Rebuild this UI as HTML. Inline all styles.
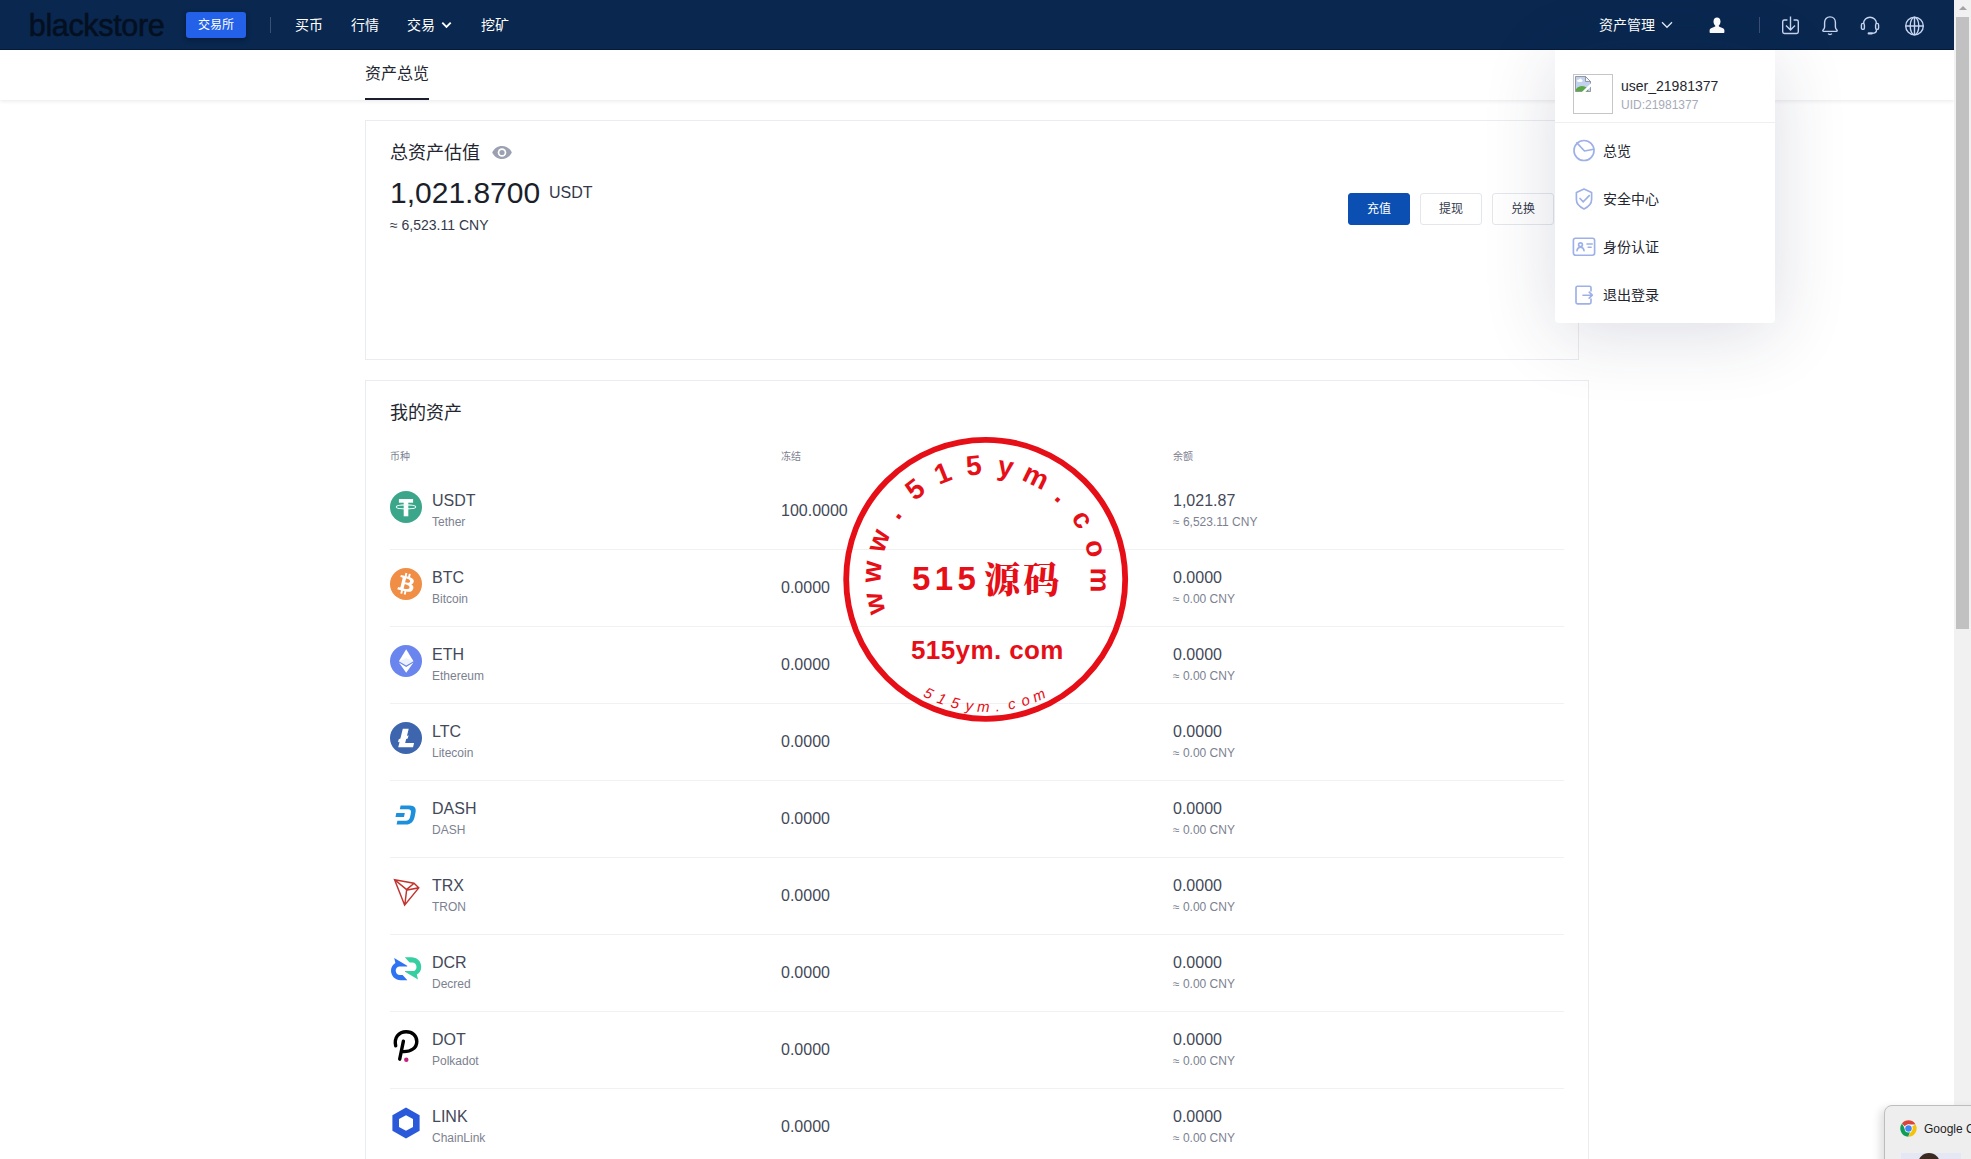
<!DOCTYPE html>
<html lang="zh-CN">
<head>
<meta charset="utf-8">
<title>资产总览</title>
<style>
*{box-sizing:border-box;margin:0;padding:0}
html,body{width:1971px;height:1159px;overflow:hidden;background:#fff}
body{position:relative;font-family:"Liberation Sans","Noto Sans CJK SC",sans-serif;color:#1e2330;-webkit-font-smoothing:antialiased}
.abs{position:absolute;white-space:nowrap}
/* header */
#hdr{position:absolute;left:0;top:0;width:1954px;height:50px;background:#09274f;border-bottom:1px solid #041a3a}
#logo{left:28.800px;top:5px;font-size:30.5px;line-height:40px;color:#040f20;letter-spacing:-.35px;-webkit-text-stroke:.5px #040f20}
#exch{left:186px;top:12px;width:60px;height:26px;border-radius:3px;background:#2461e9;color:#fff;font-size:12px;line-height:26px;text-align:center;box-shadow:0 2px 5px rgba(0,5,30,.35)}
.hi{position:absolute}
.vsep{position:absolute;width:1px;background:#3a5073}
.nav{position:absolute;top:0;height:50px;line-height:50px;font-size:14px;color:#fff;white-space:nowrap}
/* subnav */
#sub{position:absolute;left:0;top:50px;width:1954px;height:50px;background:#fff;box-shadow:0 1px 4px rgba(20,30,60,.10)}
#subt{left:365px;top:51px;height:50px;line-height:46px;font-size:16px;color:#23262f}
#subu{position:absolute;left:365px;top:98px;width:64px;height:2px;background:#1b1f2b}
/* cards */
.card{position:absolute;background:#fff;border:1px solid #ebecef}
#c1{left:365px;top:120px;width:1214px;height:240px}
#c2{left:365px;top:380px;width:1224px;height:800px}
.h18{font-size:18px;line-height:24px;color:#23262f}
#total{left:390px;top:175px;font-size:30px;line-height:36px;color:#1b1f2b}
#totalu{left:549px;top:183px;font-size:16px;line-height:20px;color:#33394a}
#cny{left:390px;top:217px;font-size:14px;line-height:16px;color:#33394a}
.btn{position:absolute;top:193px;width:62px;height:32px;border-radius:3px;border:1px solid #e4e6ec;background:#fff;font-size:12px;line-height:30px;text-align:center;color:#33394a}
.btn.p{background:#0b4fb3;border-color:#0b4fb3;color:#fff}
/* table */
.th{position:absolute;top:450px;font-size:10px;line-height:14px;color:#7c8190}
.row{position:absolute;left:390px;width:1174px;height:77px;border-bottom:1px solid #f0f1f3}
.row .ic{position:absolute;left:0;top:18px;width:32px;height:32px;overflow:visible}
.row .sym{position:absolute;left:42px;top:18px;font-size:16px;line-height:20px;color:#434959}
.row .nm{position:absolute;left:42px;top:42px;font-size:12px;line-height:14px;color:#7c8190}
.row .fr{position:absolute;left:391px;top:28px;font-size:16px;line-height:20px;color:#434959}
.row .bal{position:absolute;left:783px;top:18px;font-size:16px;line-height:20px;color:#434959}
.row .bc{position:absolute;left:783px;top:42px;font-size:12px;line-height:14px;color:#7c8190}
/* dropdown */
#dd{position:absolute;left:1555px;top:50px;width:220px;height:273px;background:#fff;border-radius:0 0 4px 4px;box-shadow:0 10px 72px rgba(35,45,90,.16)}
#ava{position:absolute;left:18px;top:24px;width:40px;height:40px;border:1px solid #c6c6c6;background:#fff}
#un{left:66px;top:28px;font-size:14px;line-height:16px;color:#23262f}
#uid{left:66px;top:48px;font-size:12px;line-height:14px;color:#a6abb8}
#ddl{position:absolute;left:0;top:72px;width:220px;height:1px;background:#eeeff3}
.mi{position:absolute;left:0;width:220px;height:48px}
.mi svg{position:absolute;left:17px;top:12px;width:24px;height:24px}
.mi span{position:absolute;left:48px;top:0;line-height:48px;font-size:14px;color:#23262f}
/* scrollbar */
#sb{position:absolute;left:1954px;top:0;width:17px;height:1159px;background:#f1f1f1}
#sbt{position:absolute;left:2px;top:17px;width:13px;height:612px;background:#c1c1c1}
#sba{position:absolute;left:4.5px;top:6px;width:0;height:0;border-left:4px solid transparent;border-right:4px solid transparent;border-bottom:4.5px solid #a3a3a3}
/* chrome toast */
#toast{position:absolute;left:1884px;top:1105px;width:120px;height:80px;background:#eee;border:1px solid #bdbdbd;border-radius:8px;box-shadow:-4px 3px 9px rgba(0,0,0,.13)}
#toast span{position:absolute;left:39px;top:14.5px;font-size:12px;line-height:16px;color:#222;white-space:nowrap}
</style>
</head>
<body>
<div id="sub"></div>
<div id="subt" class="abs">资产总览</div>
<div id="subu"></div>

<div id="c1" class="card"></div>
<div class="abs h18" style="left:390px;top:141px">总资产估值</div>
<svg class="abs" style="left:492px;top:145px" width="20" height="15" viewBox="0 0 20 15"><path fill="#9ba1b1" d="M10 1C5.600 1 1.800 3.700.2 7.500 1.800 11.300 5.600 14 10 14s8.200-2.700 9.800-6.500C18.200 3.700 14.400 1 10 1z"/><circle cx="10" cy="7.500" r="4.300" fill="#fff"/><circle cx="10" cy="7.500" r="2.600" fill="#9ba1b1"/></svg>
<div id="total" class="abs">1,021.8700</div>
<div id="totalu" class="abs">USDT</div>
<div id="cny" class="abs">≈ 6,523.11 CNY</div>
<div class="btn p" style="left:1348px">充值</div>
<div class="btn" style="left:1420px">提现</div>
<div class="btn" style="left:1492px">兑换</div>

<div id="c2" class="card"></div>
<div class="abs h18" style="left:390px;top:401px">我的资产</div>
<div class="th" style="left:390px">币种</div>
<div class="th" style="left:781px">冻结</div>
<div class="th" style="left:1173px">余额</div>

<!--ROWS-->
<div class="row" style="top:473px"><svg class="ic" viewBox="0 0 32 32"><circle cx="16" cy="16" r="16" fill="#3ca68b"/><rect x="8.900" y="8" width="14.200" height="3.700" fill="#fff"/><rect x="13.700" y="8" width="4.600" height="17.300" fill="#fff"/><ellipse cx="16" cy="15.900" rx="9.700" ry="2" fill="none" stroke="#e9fff8" stroke-width="1.100"/></svg><div class="sym">USDT</div><div class="nm">Tether</div><div class="fr">100.0000</div><div class="bal">1,021.87</div><div class="bc">≈ 6,523.11 CNY</div></div>
<div class="row" style="top:550px"><svg class="ic" viewBox="0 0 32 32"><circle cx="16" cy="16" r="16" fill="#ef8e44"/><path fill="#fff" transform="translate(16 16) scale(1.1) translate(-16.1 -16.2)" d="M23.189 14.02c.314-2.096-1.283-3.223-3.465-3.975l.708-2.84-1.728-.43-.69 2.765c-.454-.114-.92-.22-1.385-.326l.695-2.783L15.596 6l-.708 2.839c-.376-.086-.746-.17-1.104-.26l.002-.009-2.384-.595-.46 1.846s1.283.294 1.256.312c.7.175.826.638.805 1.006l-.806 3.235c.048.012.11.03.18.057l-.183-.045-1.13 4.532c-.086.212-.303.531-.793.41.018.025-1.256-.313-1.256-.313l-.858 1.978 2.25.561c.418.105.828.215 1.231.318l-.715 2.872 1.727.43.708-2.84c.472.127.93.245 1.378.357l-.706 2.828 1.728.43.715-2.866c2.948.558 5.164.333 6.097-2.333.752-2.146-.037-3.385-1.588-4.192 1.13-.26 1.98-1.003 2.207-2.538zm-3.95 5.538c-.533 2.147-4.148.986-5.32.695l.95-3.805c1.172.293 4.929.872 4.37 3.11zm.535-5.569c-.487 1.953-3.495.96-4.47.717l.86-3.45c.975.243 4.118.696 3.61 2.733z"/></svg><div class="sym">BTC</div><div class="nm">Bitcoin</div><div class="fr">0.0000</div><div class="bal">0.0000</div><div class="bc">≈ 0.00 CNY</div></div>
<div class="row" style="top:627px"><svg class="ic" viewBox="0 0 32 32"><circle cx="16" cy="16" r="16" fill="#6a86ee"/><path fill="#fff" d="M16.200 4.200l7.300 12-7.300 4.300-7.300-4.300z"/><path fill="#fff" d="M16.200 27.800l7.300-10.200-7.300 4.300-7.300-4.300z"/><path fill="#6a86ee" fill-opacity=".12" d="M16.200 13l7.300 3.200-7.300 4.300-7.300-4.300z"/></svg><div class="sym">ETH</div><div class="nm">Ethereum</div><div class="fr">0.0000</div><div class="bal">0.0000</div><div class="bc">≈ 0.00 CNY</div></div>
<div class="row" style="top:704px"><svg class="ic" viewBox="0 0 32 32"><circle cx="16" cy="16" r="16" fill="#3d66ae"/><path fill="#fff" transform="translate(16 16) scale(1.15) translate(-16 -16)" d="M10.427 19.214L9 19.768l.688-2.759 1.444-.58L13.213 8h5.129l-1.519 6.196 1.41-.571-.68 2.75-1.427.571-.848 3.483H23L22.127 24H9.252z"/></svg><div class="sym">LTC</div><div class="nm">Litecoin</div><div class="fr">0.0000</div><div class="bal">0.0000</div><div class="bc">≈ 0.00 CNY</div></div>
<div class="row" style="top:781px"><svg class="ic" viewBox="0 0 32 32"><g fill="#1c8fdd"><path d="M10.6 6.4h9.2c5 0 6.6 2.9 5.7 7.2l-.9 4.4c-.9 4.300-3.600 7.600-8.800 7.600H6.600l.8-3.900h8.400c2.400 0 3.800-1.300 4.300-3.700l.8-3.900c.5-2.400-.4-3.800-2.800-3.800H9.800z"/><path d="M6.300 14.100h8.500l-.8 3.800H5.500z"/></g></svg><div class="sym">DASH</div><div class="nm">DASH</div><div class="fr">0.0000</div><div class="bal">0.0000</div><div class="bc">≈ 0.00 CNY</div></div>
<div class="row" style="top:858px"><svg class="ic" viewBox="0 0 32 32"><g transform="translate(16.6 16.6) scale(1.45) translate(-16.6 -16.8)"><path fill="#c2342f" d="M21.932 9.913L7.5 7.257l7.595 19.112 10.583-12.894-3.746-3.562zm-.232 1.170l2.208 2.099-6.038 1.093 3.830-3.192zm-5.142 2.973l-6.364-5.278 10.402 1.914-4.038 3.364zm-.453.934l-1.038 8.580L9.472 9.487l6.633 5.502zm.960.455l6.687-1.210-7.670 9.343.983-8.133z"/></g></svg><div class="sym">TRX</div><div class="nm">TRON</div><div class="fr">0.0000</div><div class="bal">0.0000</div><div class="bc">≈ 0.00 CNY</div></div>
<div class="row" style="top:935px"><svg class="ic" viewBox="0 0 32 32"><g transform="translate(0 -.8)"><path fill="#2e74f2" d="M4.200 5.900L17.200 13.500V14.200H9.600C7.300 14.200 5.700 16 5.700 18.400C5.700 20.900 7.400 22.900 10 22.900H12.600L17.400 28H10.800C5.200 28 1 24 1 18.400C1 14.900 2.600 12.300 5.400 10.700Z"/><path fill="#35cfa1" transform="rotate(180 16.1 16.55)" d="M4.200 5.900L17.200 13.500V14.200H9.600C7.300 14.200 5.700 16 5.700 18.400C5.700 20.900 7.400 22.900 10 22.900H12.600L17.400 28H10.800C5.200 28 1 24 1 18.400C1 14.900 2.600 12.300 5.400 10.700Z"/></svg><div class="sym">DCR</div><div class="nm">Decred</div><div class="fr">0.0000</div><div class="bal">0.0000</div><div class="bc">≈ 0.00 CNY</div></div>
<div class="row" style="top:1012px"><svg class="ic" viewBox="0 0 32 32"><path fill="none" stroke="#000" stroke-width="3.400" stroke-linecap="round" stroke-linejoin="round" transform="translate(0 -1)" d="M5.700 16.800C3.900 9 8.500 2.700 16.200 2.700c6.300 0 10.600 4.200 10.600 9.700 0 6.100-5.300 10.800-14.600 10.200M13.400 12.200L9.700 30.200"/><circle cx="16.300" cy="29.800" r="2.200" fill="#c4207c"/></svg><div class="sym">DOT</div><div class="nm">Polkadot</div><div class="fr">0.0000</div><div class="bal">0.0000</div><div class="bc">≈ 0.00 CNY</div></div>
<div class="row" style="top:1089px"><svg class="ic" viewBox="0 0 32 32"><path fill="#2a5ada" d="M16 .6L2.400 8.300v15.400L16 31.400l13.600-7.700V8.300zM16 8.200l7 3.900v7.800l-7 3.900-7-3.900v-7.800z"/></svg><div class="sym">LINK</div><div class="nm">ChainLink</div><div class="fr">0.0000</div><div class="bal">0.0000</div><div class="bc">≈ 0.00 CNY</div></div>
<!--/ROWS-->
<!--STAMP-->
<svg id="stamp" width="1971" height="1159" viewBox="0 0 1971 1159" style="position:absolute;left:0;top:0;pointer-events:none" font-family="'Liberation Sans',sans-serif" fill="#e60f17">
<circle cx="985.7" cy="579.3" r="139.5" fill="none" stroke="#e60f17" stroke-width="5.8"/>
<text x="885.4 880.2 883.2 898.3 914.8 939.1 967.0 996.4 1020.7 1053.3 1070.8 1084.4 1090.8" y="612.3 583.3 554.0 521.0 501.5 484.9 475.7 474.6 479.5 498.8 517.4 542.6 567.4" rotate="-102.3 -86.2 -70.2 -54.2 -38.1 -22.1 -6.0 10.0 26.1 42.2 58.2 74.2 90.3" font-size="28" font-weight="700">www.515ym.com</text>
<text x="922.6 936.0 950.0 964.9 977.1 996.1 1009.1 1023.1 1035.2" y="695.9 702.2 707.0 710.2 711.7 711.4 709.8 706.5 702.4" rotate="26.6 20.2 13.8 7.4 1.0 -5.4 -11.8 -18.2 -24.6" font-size="15" font-style="italic">515ym.com</text>
<text x="912" y="590" font-size="33" font-weight="700" letter-spacing="4.4">515<tspan font-family="'Liberation Serif','Noto Serif CJK SC',serif" font-size="36" font-weight="900" letter-spacing="3" dx="4" dy="3">源码</tspan></text>
<text x="911" y="659" font-size="26" font-weight="700" letter-spacing="0.4">515ym. com</text>
</svg>
<!--/STAMP-->

<div id="hdr">
  <div id="logo" class="abs">blackstore</div>
  <div id="exch" class="abs">交易所</div>
  <div class="vsep" style="left:270px;top:17px;height:16px"></div>
  <div class="nav" style="left:295px">买币</div>
  <div class="nav" style="left:351px">行情</div>
  <div class="nav" style="left:407px">交易</div>
  <div class="nav" style="left:481px">挖矿</div>
  <div class="nav" style="left:1599px">资产管理</div>
  <div class="vsep" style="left:1759px;top:17px;height:16px"></div>

  <svg class="hi" style="left:441px;top:21px" width="11" height="8" viewBox="0 0 11 8"><path d="M1.300 1.600l4.200 4.200 4.200-4.200" fill="none" stroke="#fff" stroke-width="1.900"/></svg>
  <svg class="hi" style="left:1661px;top:21px" width="12" height="8" viewBox="0 0 12 8"><path d="M1 1.300l5 5 5-5" fill="none" stroke="#e6ecf7" stroke-width="1.300"/></svg>
  <svg class="hi" style="left:1709px;top:17px" width="16" height="17" viewBox="0 0 16 17"><path fill="#fff" d="M8 .6c2.100 0 3.500 1.600 3.500 3.900 0 1.600-.7 3.100-1.600 4-.3.300-.3.900.1 1.100 1.100.600 3.200 1.200 4.400 2 .8.500 1 1.200 1 2.100v1.300c0 .6-.4 1-1 1H1.600c-.6 0-1-.4-1-1v-1.300c0-.9.200-1.600 1-2.100 1.200-.8 3.300-1.400 4.400-2 .4-.2.400-.8.100-1.100C5.200 7.600 4.500 6.100 4.500 4.500 4.500 2.200 5.900.6 8 .6z"/></svg>
  <svg class="hi" style="left:1781px;top:15px" width="19" height="20" viewBox="0 0 19 20" fill="none" stroke="#c6d4ee" stroke-width="1.400"><path d="M6.400 5H3.400a1.700 1.700 0 0 0-1.700 1.700v10.100a1.700 1.700 0 0 0 1.700 1.700h12.200a1.700 1.700 0 0 0 1.700-1.700V6.700A1.700 1.700 0 0 0 15.600 5h-3"/><path d="M9.500 1.400v13.300M5 10.500l4.500 4.400 4.500-4.400"/></svg>
  <svg class="hi" style="left:1820px;top:15px" width="20" height="21" viewBox="0 0 20 21" fill="none" stroke="#c6d4ee" stroke-width="1.400"><path d="M10 1.900c-3.300 0-5.400 2.500-5.400 5.700v4.400c0 1.200-.6 2-1.500 2.900-.6.600-.3 1.500.5 1.500h12.800c.8 0 1.100-.9.500-1.500-.9-.9-1.500-1.700-1.500-2.900V7.600c0-3.200-2.100-5.700-5.400-5.700z"/><path d="M8.100 18.600c.5.600 1.100.9 1.900.9s1.400-.3 1.900-.9"/></svg>
  <svg class="hi" style="left:1860px;top:15px" width="20" height="21" viewBox="0 0 20 21" fill="none" stroke="#c6d4ee" stroke-width="1.400"><path d="M3.600 8.600a6.400 6.400 0 0 1 12.800 0"/><rect x="1.400" y="8.400" width="3" height="6" rx="1.500"/><rect x="15.600" y="8.400" width="3" height="6" rx="1.500"/><path d="M16.600 14.400c0 2.500-1.800 3.900-4.800 3.900"/><path d="M8.700 18.400h3" stroke-width="2.200" stroke-linecap="round"/></svg>
  <svg class="hi" style="left:1904px;top:15px" width="21" height="22" viewBox="0 0 21 22" fill="none" stroke="#c6d4ee" stroke-width="1.400"><circle cx="10.500" cy="11" r="8.800"/><ellipse cx="10.500" cy="11" rx="4.300" ry="8.800"/><path d="M10.500 2.200v17.600M1.700 11h17.600"/></svg>
</div>

<div id="dd">
  <div id="ava"><svg style="position:absolute;left:1px;top:1px" width="16" height="16" viewBox="0 0 16 16"><defs><clipPath id="pg"><path d="M.5.500H10.500L15.500 5.500V15.500H.5z"/></clipPath></defs><g clip-path="url(#pg)"><rect width="16" height="16" fill="#c2d2ee"/><ellipse cx="4.800" cy="4.700" rx="3" ry="1.200" fill="#fff"/><circle cx="5.300" cy="3.900" r="1.500" fill="#fff"/><ellipse cx="7" cy="15.500" rx="6.500" ry="5.500" fill="#58a844"/></g><path d="M.5.500H10.500L15.500 5.500V15.500H.5z" fill="none" stroke="#8b9099" stroke-width=".9"/><path d="M10.500.5V5.500H15.500z" fill="#f4f6fa" stroke="#8b9099" stroke-width=".9" stroke-linejoin="round"/><path d="M16.500 6.700L6.300 16.500H9.800L16.500 10z" fill="#fff"/></svg></div>
  <div id="un" class="abs">user_21981377</div>
  <div id="uid" class="abs">UID:21981377</div>
  <div id="ddl"></div>
  <div class="mi" style="top:77px"><svg viewBox="0 0 24 24" fill="none" stroke="#9db0e7" stroke-width="1.650" stroke-linecap="round" stroke-linejoin="round"><circle cx="12" cy="11.500" r="10"/><path d="M4.900 3.900l7.600 8.100 9.300-1.700"/></svg><span>总览</span></div>
  <div class="mi" style="top:125px"><svg viewBox="0 0 24 24" fill="none" stroke="#9db0e7" stroke-width="1.650" stroke-linecap="round" stroke-linejoin="round"><path d="M12 2.100l7.600 3.300v7.100c0 4.500-3.200 7.400-7.600 9.400-4.400-2-7.600-4.900-7.600-9.400V5.400z"/><path d="M8 11.500l3.300 3.300 5.900-6.200"/></svg><span>安全中心</span></div>
  <div class="mi" style="top:173px"><svg viewBox="0 0 24 24" fill="none" stroke="#9db0e7" stroke-width="1.650" stroke-linecap="round" stroke-linejoin="round"><rect x="1.400" y="3.200" width="21.200" height="17" rx="2.200"/><circle cx="8.500" cy="9.700" r="1.900"/><path d="M5 15.600c.3-2.200 1.700-3.400 3.500-3.400s3.200 1.200 3.500 3.400M15 9h5.200M16.200 12.200h2.900"/></svg><span>身份认证</span></div>
  <div class="mi" style="top:221px"><svg viewBox="0 0 24 24" fill="none" stroke="#9db0e7" stroke-width="1.650" stroke-linecap="round" stroke-linejoin="round"><path d="M19 8V4.700a1.500 1.500 0 0 0-1.500-1.500H5.500A1.500 1.500 0 0 0 4 4.700v14.600a1.500 1.500 0 0 0 1.500 1.500h12a1.500 1.500 0 0 0 1.500-1.500V16"/><path d="M11 12.200h9.200M17.200 9.200l3.100 3-3.100 3"/></svg><span>退出登录</span></div>
</div>

<div id="sb"><div id="sba"></div><div id="sbt"></div></div>
<div id="toast"><svg style="position:absolute;left:15px;top:14px" width="17" height="17" viewBox="0 0 48 48"><circle cx="24" cy="24" r="23" fill="#fff"/><path d="M24 1a23 23 0 0 1 19.900 11.500H24a11.500 11.500 0 0 0-10 5.800L5.600 10A23 23 0 0 1 24 1z" fill="#db4437"/><path d="M43.900 12.500A23 23 0 0 1 23 47l9.900-17.200A11.500 11.500 0 0 0 34 18z" fill="#f4c20d"/><path d="M23 47A23 23 0 0 1 5.600 10l8.400 14.600a11.500 11.500 0 0 0 14.500 9z" fill="#0f9d58"/><circle cx="24" cy="24" r="11" fill="#fff"/><circle cx="24" cy="24" r="9.200" fill="#4285f4"/></svg><div style="position:absolute;left:16px;top:47px;width:60px;height:40px;background:#e6e7f4"></div><div style="position:absolute;left:33px;top:47px;width:22px;height:20px;border-radius:11px 11px 0 0;background:#3a2a22"></div><span>Google Chrome</span></div>
</body>
</html>
